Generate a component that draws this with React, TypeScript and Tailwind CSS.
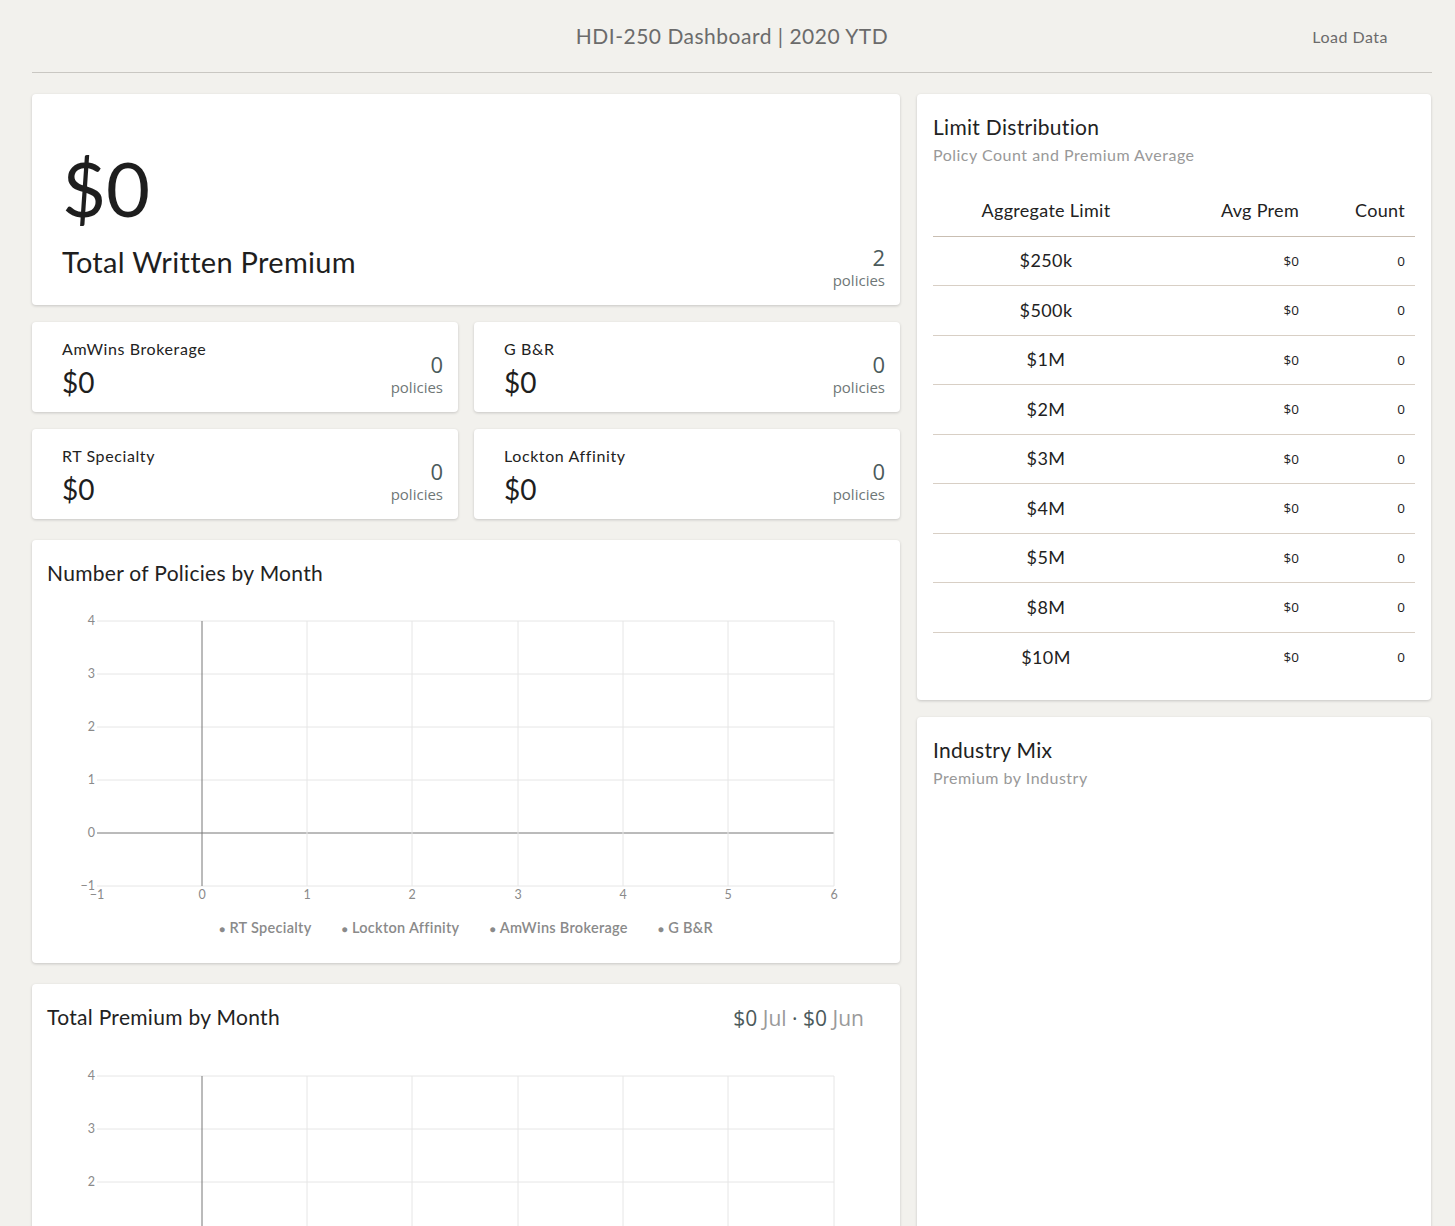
import React from 'react';

const font = { fontFamily: 'Lato, "Open Sans", sans-serif' };
const openSans = { fontFamily: '"Open Sans", sans-serif' };

const brokers = [
  { name: 'AmWins Brokerage', premium: '$0', count: 0 },
  { name: 'G B&R', premium: '$0', count: 0 },
  { name: 'RT Specialty', premium: '$0', count: 0 },
  { name: 'Lockton Affinity', premium: '$0', count: 0 },
];

const limits = ['$250k', '$500k', '$1M', '$2M', '$3M', '$4M', '$5M', '$8M', '$10M'];

const legend = ['RT Specialty', 'Lockton Affinity', 'AmWins Brokerage', 'G B&R'];

const Card: React.FC<{ className?: string; children: React.ReactNode }> = ({ className = '', children }) => (
  <div className={`rounded-[4px] bg-white shadow-[0_1px_3px_rgba(0,0,0,0.18)] ${className}`}>{children}</div>
);

const Count: React.FC<{ n: number; className?: string }> = ({ n, className = '' }) => (
  <div className={`text-right ${className}`} style={openSans}>
    <div className="text-[22px] leading-[26px] text-[#4b5a5b]">{n}</div>
    <div className="text-[15px] leading-[20px] text-[#6f7777]">policies</div>
  </div>
);

// grid chart, x positions measured from the card's left edge
const Chart: React.FC = () => {
  const xs = [65, 170, 275, 380, 486, 591, 696, 802];
  const yTicks = [4, 3, 2, 1, 0, -1];
  const yAt = (v: number) => 20 + (4 - v) * 53;
  const bottom = yAt(-1);
  return (
    <svg width="867" height={305} className="block" style={{ fontFamily: 'Lato, sans-serif' }}>
      {yTicks.map((v) => (
        <g key={v}>
          <line x1={65} x2={802} y1={yAt(v)} y2={yAt(v)} stroke={v === 0 ? '#777' : '#e6e6e6'} strokeWidth={1} />
          <text x={63} y={yAt(v) + 4} textAnchor="end" fontSize="12.5" fill="#8a8a8a">
            {v < 0 ? '\u2212' + Math.abs(v) : v}
          </text>
        </g>
      ))}
      {xs.slice(2).map((x) => (
        <line key={x} x1={x} x2={x} y1={20} y2={bottom} stroke="#e6e6e6" />
      ))}
      <line x1={170} x2={170} y1={20} y2={bottom} stroke="#777" />
      {xs.map((x, i) => (
        <text key={x} x={x} y={298} textAnchor="middle" fontSize="12.5" fill="#8a8a8a">
          {i === 0 ? '\u22121' : i - 1}
        </text>
      ))}
    </svg>
  );
};

export default function App() {
  return (
    <div className="min-h-screen bg-[#f2f1ed] pl-[32px] pr-[23px] text-[#222]" style={font}>
      <header className="relative flex h-[73px] items-center justify-center border-b border-[#c9c7c2]">
        <h1 className="text-[21px] tracking-[0.5px] text-[#6b6b6b]">HDI-250 Dashboard | 2020 YTD</h1>
        <button className="absolute right-[44px] top-[25px] text-[16px] tracking-[0.5px] text-[#6b6b6b]">Load Data</button>
      </header>

      <div className="mt-[21px] flex gap-[17px] pb-[16px]">
        <div className="flex w-[868px] flex-col">
          <Card className="flex h-[211px] items-end justify-between pb-[15px] pl-[30px] pr-[15px]">
            <div className="mb-[11px]">
              <div className="text-[76px] leading-[80px] text-[#1e1e1e]">$0</div>
              <div className="mt-[17px] text-[29px] leading-[34px] tracking-[0.3px] text-[#1e1e1e]">Total Written Premium</div>
            </div>
            <Count n={2} />
          </Card>

          <div className="mt-[17px] grid grid-cols-2 gap-x-[16px] gap-y-[17px]">
            {brokers.map((b) => (
              <Card key={b.name} className="flex h-[90px] justify-between pl-[30px] pr-[15px]">
                <div className="pt-[17px]">
                  <div className="text-[16px] leading-[20px] tracking-[0.6px]">{b.name}</div>
                  <div className="mt-[6px] text-[28px] leading-[34px] text-[#1e1e1e]">{b.premium}</div>
                </div>
                <Count n={b.count} className="self-end pb-[15px]" />
              </Card>
            ))}
          </div>

          <Card className="mt-[21px] h-[423px]">
            <div className="px-[15px] pt-[19px] text-[21px] leading-[28px] tracking-[0.3px]">Number of Policies by Month</div>
            <div className="mt-[14px]">
              <Chart />
            </div>
            <div className="mt-[11px] flex justify-center gap-[30px] text-[14.5px] font-semibold tracking-[0.3px] text-[#8a8a8a]">
              {legend.map((l) => (
                <span key={l}>
                  <span className="mr-[4px] text-[10px]">●</span>
                  {l}
                </span>
              ))}
            </div>
          </Card>

          <Card className="mt-[21px] h-[423px]">
            <div className="flex items-start justify-between pl-[15px] pr-[36px] pt-[19px]">
              <div className="text-[21px] leading-[28px] tracking-[0.3px]">Total Premium by Month</div>
              <div className="mt-[1px] text-[21px] leading-[29px]" style={openSans}>
                <span className="text-[#4b5a5b]">$0</span> <span className="text-[#9a9a9a]">Jul</span>{' '}
                <span className="text-[#4b5a5b]">·</span> <span className="text-[#4b5a5b]">$0</span>{' '}
                <span className="text-[#9a9a9a]">Jun</span>
              </div>
            </div>
            <div className="mt-[23px]">
              <Chart />
            </div>
          </Card>
        </div>

        <div className="flex w-[514px] flex-col">
          <Card className="h-[606px] px-[16px] pt-[19px]">
            <div className="text-[21px] leading-[28px] tracking-[0.3px]">Limit Distribution</div>
            <div className="mt-[4px] text-[16px] leading-[20px] tracking-[0.5px] text-[#999]">Policy Count and Premium Average</div>
            <table className="mt-[21px] w-full table-fixed border-collapse">
              <thead>
                <tr className="h-[50px] border-b border-[#c9beb2] text-[18px]">
                  <th className="w-[226px] text-center font-normal tracking-[0.3px]">Aggregate Limit</th>
                  <th className="w-[140px] text-right font-normal tracking-[0.3px]">Avg Prem</th>
                  <th className="pr-[10px] text-right font-normal tracking-[0.3px]">Count</th>
                </tr>
              </thead>
              <tbody>
                {limits.map((l, i) => (
                  <tr key={l} className={`h-[49.5px] ${i < limits.length - 1 ? 'border-b border-[#d8cfc5]' : ''}`}>
                    <td className="text-center text-[18px] tracking-[0.4px]">{l}</td>
                    <td className="text-right text-[13.5px]" style={openSans}>
                      $0
                    </td>
                    <td className="pr-[10px] text-right text-[13.5px]" style={openSans}>
                      0
                    </td>
                  </tr>
                ))}
              </tbody>
            </table>
          </Card>

          <Card className="mt-[17px] h-[690px] px-[16px] pt-[19px]">
            <div className="text-[21px] leading-[28px] tracking-[0.3px]">Industry Mix</div>
            <div className="mt-[4px] text-[16px] leading-[20px] tracking-[0.5px] text-[#999]">Premium by Industry</div>
          </Card>
        </div>
      </div>
    </div>
  );
}
